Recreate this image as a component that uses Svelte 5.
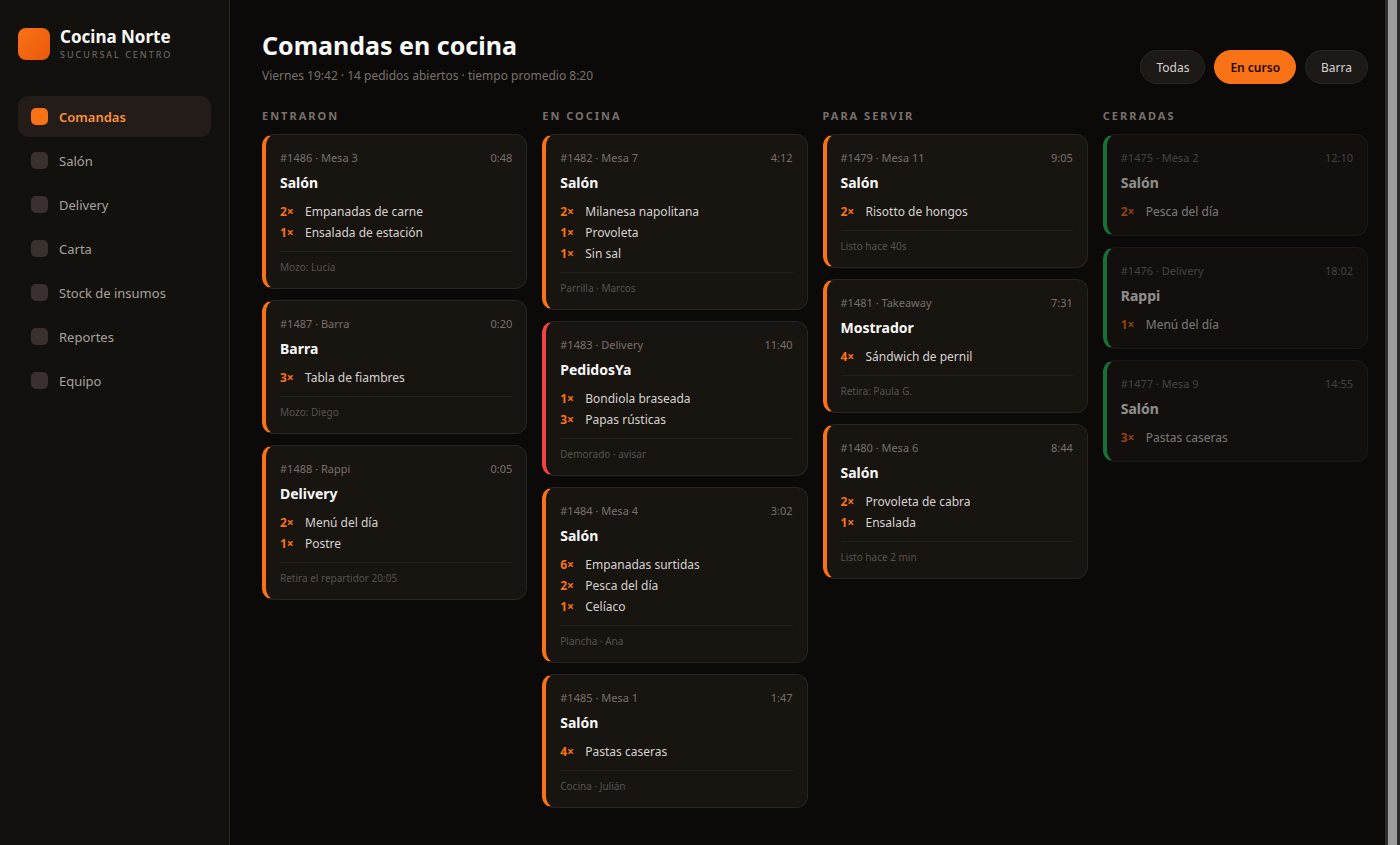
<script lang="ts">
	type Item = { qty: number; name: string };
	type Order = {
		id: number;
		place: string;
		time: string;
		title: string;
		items: Item[];
		note?: string;
		late?: boolean;
	};
	type Column = { title: string; done?: boolean; orders: Order[] };

	const NAV = ['Comandas', 'Salón', 'Delivery', 'Carta', 'Stock de insumos', 'Reportes', 'Equipo'];
	const FILTERS = ['Todas', 'En curso', 'Barra'];

	let section = $state('Comandas');
	let filter = $state('En curso');

	const columns: Column[] = [
		{
			title: 'Entraron',
			orders: [
				{
					id: 1486,
					place: 'Mesa 3',
					time: '0:48',
					title: 'Salón',
					items: [
						{ qty: 2, name: 'Empanadas de carne' },
						{ qty: 1, name: 'Ensalada de estación' }
					],
					note: 'Mozo: Lucía'
				},
				{
					id: 1487,
					place: 'Barra',
					time: '0:20',
					title: 'Barra',
					items: [{ qty: 3, name: 'Tabla de fiambres' }],
					note: 'Mozo: Diego'
				},
				{
					id: 1488,
					place: 'Rappi',
					time: '0:05',
					title: 'Delivery',
					items: [
						{ qty: 2, name: 'Menú del día' },
						{ qty: 1, name: 'Postre' }
					],
					note: 'Retira el repartidor 20:05'
				}
			]
		},
		{
			title: 'En cocina',
			orders: [
				{
					id: 1482,
					place: 'Mesa 7',
					time: '4:12',
					title: 'Salón',
					items: [
						{ qty: 2, name: 'Milanesa napolitana' },
						{ qty: 1, name: 'Provoleta' },
						{ qty: 1, name: 'Sin sal' }
					],
					note: 'Parrilla · Marcos'
				},
				{
					id: 1483,
					place: 'Delivery',
					time: '11:40',
					title: 'PedidosYa',
					items: [
						{ qty: 1, name: 'Bondiola braseada' },
						{ qty: 3, name: 'Papas rústicas' }
					],
					note: 'Demorado · avisar',
					late: true
				},
				{
					id: 1484,
					place: 'Mesa 4',
					time: '3:02',
					title: 'Salón',
					items: [
						{ qty: 6, name: 'Empanadas surtidas' },
						{ qty: 2, name: 'Pesca del día' },
						{ qty: 1, name: 'Celíaco' }
					],
					note: 'Plancha · Ana'
				},
				{
					id: 1485,
					place: 'Mesa 1',
					time: '1:47',
					title: 'Salón',
					items: [{ qty: 4, name: 'Pastas caseras' }],
					note: 'Cocina · Julián'
				}
			]
		},
		{
			title: 'Para servir',
			orders: [
				{
					id: 1479,
					place: 'Mesa 11',
					time: '9:05',
					title: 'Salón',
					items: [{ qty: 2, name: 'Risotto de hongos' }],
					note: 'Listo hace 40s'
				},
				{
					id: 1481,
					place: 'Takeaway',
					time: '7:31',
					title: 'Mostrador',
					items: [{ qty: 4, name: 'Sándwich de pernil' }],
					note: 'Retira: Paula G.'
				},
				{
					id: 1480,
					place: 'Mesa 6',
					time: '8:44',
					title: 'Salón',
					items: [
						{ qty: 2, name: 'Provoleta de cabra' },
						{ qty: 1, name: 'Ensalada' }
					],
					note: 'Listo hace 2 min'
				}
			]
		},
		{
			title: 'Cerradas',
			done: true,
			orders: [
				{
					id: 1475,
					place: 'Mesa 2',
					time: '12:10',
					title: 'Salón',
					items: [{ qty: 2, name: 'Pesca del día' }]
				},
				{
					id: 1476,
					place: 'Delivery',
					time: '18:02',
					title: 'Rappi',
					items: [{ qty: 1, name: 'Menú del día' }]
				},
				{
					id: 1477,
					place: 'Mesa 9',
					time: '14:55',
					title: 'Salón',
					items: [{ qty: 3, name: 'Pastas caseras' }]
				}
			]
		}
	];
</script>

<div class="app">
	<aside class="sidebar">
		<div class="brand">
			<span class="logo"></span>
			<div>
				<div class="brand-name">Cocina Norte</div>
				<div class="brand-sub">Sucursal Centro</div>
			</div>
		</div>
		<nav>
			{#each NAV as label}
				<a href="#{label}" class:active={section === label} onclick={() => (section = label)}>
					<span class="icon"></span>
					{label}
				</a>
			{/each}
		</nav>
	</aside>

	<main>
		<header>
			<div>
				<h1>Comandas en cocina</h1>
				<p>Viernes 19:42 · 14 pedidos abiertos · tiempo promedio 8:20</p>
			</div>
			<div class="filters">
				{#each FILTERS as name}
					<button type="button" class:on={filter === name} onclick={() => (filter = name)}>{name}</button>
				{/each}
			</div>
		</header>

		<div class="board">
			{#each columns as column}
				<section>
					<h2>{column.title}</h2>
					<div class="stack">
						{#each column.orders as order (order.id)}
							<article class="card" class:late={order.late} class:done={column.done}>
								<div class="head">
									<span>#{order.id} · {order.place}</span>
									<span>{order.time}</span>
								</div>
								<h3>{order.title}</h3>
								<ul>
									{#each order.items as item}
										<li><b>{item.qty}×</b><span>{item.name}</span></li>
									{/each}
								</ul>
								{#if order.note}
									<div class="note">{order.note}</div>
								{/if}
							</article>
						{/each}
					</div>
				</section>
			{/each}
		</div>
	</main>

	<div class="scrollbar"><div class="thumb"></div></div>
</div>

<style>
	:global(body) {
		margin: 0;
		background: #0c0a09;
	}

	.app {
		display: flex;
		min-height: 100vh;
		background: #0c0a09;
		color: #fafaf9;
		font-family: 'Segoe UI', 'Noto Sans', 'Open Sans', sans-serif;
		font-size: 12px;
	}

	.app * {
		box-sizing: border-box;
	}

	.sidebar {
		flex: 0 0 230px;
		padding: 28px 18px;
		background: #13110e;
		border-right: 1px solid #292524;
	}

	.brand {
		display: flex;
		align-items: center;
		gap: 10px;
		height: 32px;
		margin-bottom: 36px;
	}

	.logo {
		width: 32px;
		height: 32px;
		border-radius: 8px;
		background: linear-gradient(135deg, #f97316, #ea580c);
	}

	.brand-name {
		font-size: 17px;
		font-weight: 700;
		line-height: 22px;
	}

	.brand-sub {
		color: #78716c;
		font-size: 9px;
		line-height: 14px;
		letter-spacing: 2px;
		text-transform: uppercase;
	}

	nav {
		display: flex;
		flex-direction: column;
		gap: 3px;
	}

	nav a {
		display: flex;
		align-items: center;
		gap: 11px;
		height: 41px;
		padding: 0 13px;
		border-radius: 10px;
		color: #a8a29e;
		font-size: 13px;
		text-decoration: none;
	}

	nav a.active {
		background: #231c18;
		color: #fb923c;
		font-weight: 600;
	}

	.icon {
		width: 17px;
		height: 17px;
		border-radius: 5px;
		background: #3a302d;
	}

	.active .icon {
		background: #f97316;
	}

	main {
		flex: 1;
		min-width: 0;
		padding: 28px 32px;
	}

	header {
		display: flex;
		align-items: flex-end;
		justify-content: space-between;
		margin-bottom: 24px;
	}

	h1 {
		margin: 0;
		font-size: 25px;
		font-weight: 700;
		line-height: 34px;
	}

	p {
		margin: 5px 0 0;
		color: #78716c;
		line-height: 17px;
	}

	.filters {
		display: flex;
		gap: 9px;
	}

	button {
		height: 34px;
		padding: 0 15px;
		border: 1px solid #292524;
		border-radius: 17px;
		background: #1c1917;
		color: #d6d3d1;
		font: inherit;
		cursor: pointer;
	}

	button.on {
		border-color: #f97316;
		background: #f97316;
		color: #1c0a00;
		font-weight: 600;
	}

	.board {
		display: grid;
		grid-template-columns: repeat(4, minmax(0, 1fr));
		gap: 15px;
		align-items: start;
	}

	h2 {
		margin: 0 0 10px;
		color: #78716c;
		font-size: 11px;
		font-weight: 700;
		line-height: 16px;
		letter-spacing: 2px;
		text-transform: uppercase;
	}

	.stack {
		display: flex;
		flex-direction: column;
		gap: 11px;
	}

	.card {
		padding: 14px 14px 13px;
		border: 1px solid #292524;
		border-left: 4px solid #f97316;
		border-radius: 12px;
		background: #181410;
	}

	.card.late {
		border-left-color: #ef4444;
	}

	.card.done {
		border-left-color: #22c55e;
		opacity: 0.55;
	}

	.head {
		display: flex;
		justify-content: space-between;
		color: #78716c;
		font-size: 11px;
		line-height: 18px;
	}

	h3 {
		margin: 5px 0 7px;
		font-size: 14px;
		font-weight: 700;
		line-height: 22px;
	}

	ul {
		margin: 0;
		padding: 0;
		list-style: none;
	}

	li {
		display: flex;
		gap: 8px;
		color: #d6d3d1;
		line-height: 21px;
	}

	li b {
		flex: 0 0 17px;
		color: #f97316;
	}

	.note {
		margin-top: 8px;
		padding-top: 8px;
		border-top: 1px solid #231f1c;
		color: #57534e;
		font-size: 10px;
		line-height: 15px;
	}

	.scrollbar {
		position: fixed;
		top: 0;
		right: 0;
		bottom: 0;
		width: 15px;
		padding: 0 3px;
		background: #2c2c2c;
	}

	.thumb {
		height: 100%;
		background: #9f9f9f;
	}
</style>
